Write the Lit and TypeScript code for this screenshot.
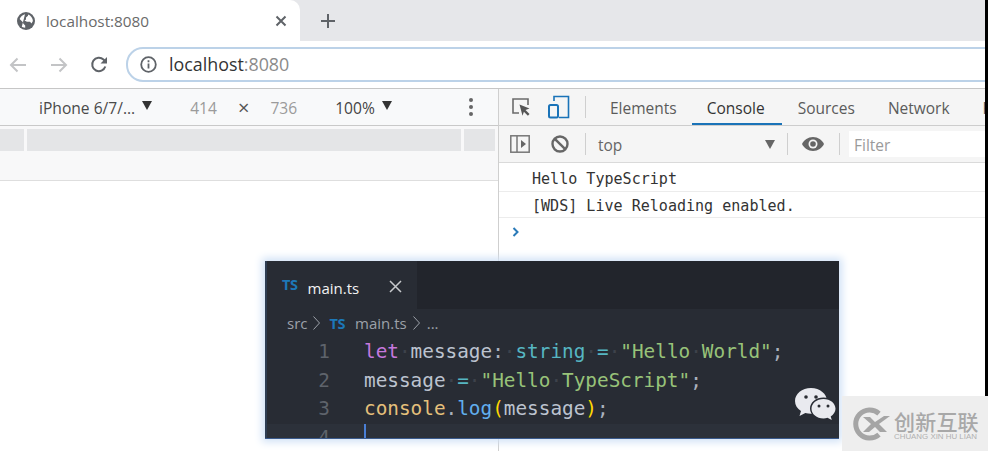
import { LitElement, html, css, svg } from "lit";
import { customElement } from "lit/decorators.js";

type Tok = [string, string];
const W: Tok = ["\u00b7", "ws"];
const CODE: Tok[][] = [
  [["let", "kw"], W, ["message", "id"], [":", "op"], W, ["string", "ty"], W, ["=", "eq"], W, ['"Hello', "st"], W, ['World"', "st"], [";", "op"]],
  [["message", "id"], W, ["=", "eq"], W, ['"Hello', "st"], W, ['TypeScript"', "st"], [";", "op"]],
  [["console", "cl"], [".", "op"], ["log", "fn"], ["(", "br"], ["message", "id"], [")", "br"], [";", "op"]],
];

@customElement("app-root")
export class AppRoot extends LitElement {
  static styles = css`
    :host {
      display: block;
      position: relative;
      width: 988px;
      height: 451px;
      overflow: hidden;
      background: #fff;
      font-family: "Open Sans", "Noto Sans", sans-serif;
      color: #4a4a4a;
    }
    svg { display: block; flex: none; }

    .strip { display: flex; align-items: center; height: 41px; background: #e6e7ea; }
    .tab {
      display: flex; align-items: center; width: 300px; height: 41px; box-sizing: border-box;
      background: #fff; border-radius: 0 10px 0 0; padding-left: 17px; font-size: 15.3px; color: #6a6a6a;
    }
    .tab .title { margin-left: 11px; flex: 1; }
    .tab .close { margin-right: 13px; }
    .plus { margin-left: 20px; }

    .toolbar { display: flex; align-items: center; box-sizing: border-box; padding: 0 0 0 9px; background: #fff; border-bottom: 1px solid #c6c6c6; height: 48px; }
    .nav { margin-right: 23px; }
    .nav.mid { margin-right: 22px; }
    .nav.reload { margin-right: 18px; }
    .omni {
      flex: 1; display: flex; align-items: center; height: 35px; box-sizing: border-box; margin: -1px -30px 0 0;
      border: 2px solid #bcd2e8; border-radius: 17px; padding-left: 12px; font-size: 17.85px; color: #8b8b8b; background: #fff;
    }
    .omni .host { color: #333; margin-left: 12px; }

    .split { display: grid; grid-template-columns: 499px 489px; height: 362px; }
    .left { border-right: 1px solid #cfcfcf; box-sizing: border-box; }

    .devbar {
      display: flex; align-items: center; height: 37px; box-sizing: border-box; background: #f8f9fa;
      border-bottom: 1px solid #c9c9c9; font-size: 15.6px; padding: 1px 0 0 39px;
    }
    .devbar .dim { color: #9b9b9b; }
    .tri { width: 0; height: 0; border-left: 5px solid transparent; border-right: 5px solid transparent; border-top: 9px solid #333; }
    .tri.a { margin: -4px 0 0 7px; }
    .w { margin-left: 38px; }
    .x { margin-left: 21px; margin-right: 21px; color: #555; font-size: 20px; line-height: 20px; }
    .pct { margin-left: 38px; color: #444; }
    .kebab { display: flex; flex-direction: column; gap: 3px; margin: -1px 0 0 77px; }
    .kebab i { width: 4px; height: 4px; border-radius: 50%; background: #666; }

    .rulers { height: 55px; box-sizing: border-box; background: #f8f8f9; border-bottom: 1px solid #dedede; padding-top: 3px; }
    .seg { display: grid; grid-template-columns: 24px 434px 31px; column-gap: 3px; }
    .seg div { height: 22px; background: #e4e5e7; }

    .right { min-width: 0; overflow: hidden; font-size: 15.5px; }
    .dtabs {
      display: flex; align-items: center; height: 37px; box-sizing: border-box; background: #f5f5f5;
      border-bottom: 1px solid #cdcdcd; padding-left: 12px; white-space: nowrap; color: #5b5b5b;
    }
    .sep { width: 1px; height: 22px; background: #cfcfcf; flex: none; }
    .dtabs .sep { margin: 0 24px 0 15px; }
    .dtab { height: 36px; line-height: 38px; margin-right: 33px; flex: none; }
    .dtab.first { margin-right: 30px; }
    .dtab.on { margin: 0 16px 0 -15px; padding: 0 15px; width: 60px; color: #333; border-bottom: 2px solid #1a73b8; box-sizing: content-box; height: 34px; }
    .ctool {
      display: flex; align-items: center; height: 37px; box-sizing: border-box; background: #f5f5f5;
      border-bottom: 1px solid #dadada; padding-left: 11px; white-space: nowrap; color: #666;
    }
    .ctool .top { margin: 2px 0 0 12px; width: 167px; }
    .ctool .tri2 { width: 0; height: 0; border-left: 5px solid transparent; border-right: 5px solid transparent; border-top: 9px solid #666; margin-right: 12px; }
    .filter { flex: 1; height: 26px; background: #fff; margin-left: 9px; padding-left: 5px; line-height: 28px; color: #9a9a9a; }

    .log {
      font-family: "DejaVu Sans Mono", monospace; font-size: 15.05px; color: #333; padding-left: 33px;
      border-bottom: 1px solid #ececec; box-sizing: border-box; white-space: pre;
    }
    .log.a { height: 29px; line-height: 32px; }
    .log.b { height: 26px; line-height: 28px; }
    .prompt { padding: 9px 0 0 13px; }

    .panel {
      position: absolute; left: 265px; top: 261px; width: 574px; height: 178px; background: #282c34;
      box-shadow: 0 0 8px 3px #d0e1f6; overflow: hidden; border-bottom: 1px solid #3a5a8c; box-sizing: border-box;
      color: #d4d7dc;
    }
    .panel::after { content: ""; position: absolute; left: 0; top: 0; bottom: 0; width: 2px; background: #2e3d52; }
    .vtabs { display: flex; height: 48px; background: #22252c; padding-left: 2px; }
    .vtab { display: flex; align-items: center; width: 150px; background: #282c34; box-sizing: border-box; padding: 5px 0 0 15px; font-size: 15px; color: #f2f2f2; }
    .ts { font-weight: 700; color: #1d78b8; font-size: 14.5px; letter-spacing: -0.4px; font-family: "Noto Sans", sans-serif; }
    .vtab .ts { margin: -7px 10px 0 0; }
    .vtab svg { margin-left: 30px; margin-top: -3px; }
    .crumbs { display: flex; align-items: center; height: 29px; box-sizing: border-box; padding: 0 0 2px 22px; font-size: 15px; color: #9ca1a9; }
    .crumbs .c1 { margin: 0 8px 0 5px; }
    .crumbs .nm { margin-left: 10px; }
    .crumbs .c2 { margin: 0 6px 0 5px; }
    .code { font-family: "DejaVu Sans Mono", monospace; font-size: 19.35px; height: 110px; }
    .ln { display: flex; height: 28.5px; line-height: 28.5px; white-space: pre; }
    .ln .n { width: 65px; text-align: right; color: #5e636b; flex: none; }
    .ln .t { margin-left: 34px; }
    .ln.cur { background: #2c313a; position: relative; }
    .caret { position: absolute; left: 99px; top: 0; width: 2px; height: 18px; background: #4a7fd6; }
    .kw { color: #c678dd; } .id { color: #bcc3cf; } .op { color: #aab1bd; } .ty { color: #56b6c2; }
    .eq { color: #56b6c2; } .st { color: #98c379; } .cl { color: #e5c07b; } .fn { color: #61afef; } .br { color: #ffd700; }
    .ws { color: #3d424b; }
    .wechat { position: absolute; left: 795px; top: 388px; }

    .edge { position: absolute; right: 0; top: 0; width: 3px; height: 396px; background: #000; }
    .mark {
      position: absolute; left: 842px; top: 396px; width: 146px; height: 55px; background: #eeeeee;
      display: flex; align-items: center; padding-left: 11px; box-sizing: border-box; color: #a5a5a5;
    }
    .brand { margin-left: 3px; margin-top: 3px; }
    .cn { font-family: "Noto Sans CJK SC", sans-serif; font-size: 21px; font-weight: 500; line-height: 23px; letter-spacing: 0.2px; color: #a8a8a8; }
    .en { font-family: "Liberation Sans", sans-serif; font-size: 7.9px; line-height: 8px; color: #b0b0b0; white-space: nowrap; }
  `;

  private chevron() {
    return svg`<path d="M1.500 1.500l6 6.500-6 6.500" fill="none" stroke="#9ca1a9" stroke-width="1"/>`;
  }

  render() {
    return html`
      <div class="strip">
        <div class="tab">
          <svg width="18" height="18" viewBox="0 0 18 18"><circle cx="9" cy="9" r="9" fill="#5f6368"/><path d="M8 2.200C5.500 3 3.500 4.600 2.600 7l3.600 3.400v1.200l2 2v2.200c-2-.2-3-.6-3.400-1M11 2.400v1.400l-2 1.600v2l-1.500 1 2.500 1.400h3l1.500 1.600 1.400-2.400c0-2.800-1.900-5.500-4.900-6.600z" fill="#fff"/></svg>
          <span class="title">localhost:8080</span>
          <svg class="close" width="12" height="12" viewBox="0 0 12 12"><path d="M1.500 1.500l9 9M10.500 1.500l-9 9" stroke="#5f6368" stroke-width="2"/></svg>
        </div>
        <svg class="plus" width="16" height="16" viewBox="0 0 16 16"><path d="M8 1v14M1 8h14" stroke="#5f6368" stroke-width="2"/></svg>
      </div>
      <div class="toolbar">
        <svg class="nav" width="18" height="16" viewBox="0 0 18 16"><path d="M17 8H2M8.500 1.500L2 8l6.500 6.500" fill="none" stroke="#c3c4c6" stroke-width="2"/></svg>
        <svg class="nav mid" width="18" height="16" viewBox="0 0 18 16"><path d="M1 8h15M9.500 1.500L16 8l-6.500 6.500" fill="none" stroke="#c3c4c6" stroke-width="2"/></svg>
        <svg class="nav reload" width="18" height="18" viewBox="0 0 18 18"><path d="M15.300 10.500A6.700 6.700 0 1 1 13.500 3.600L15.500 5.500" fill="none" stroke="#5f6368" stroke-width="2"/><path d="M17 1v6.500h-6.500z" fill="#5f6368"/></svg>
        <div class="omni">
          <svg width="17" height="17" viewBox="0 0 17 17"><circle cx="8.500" cy="8.500" r="7.300" fill="none" stroke="#5f6368" stroke-width="1.800"/><path d="M8.500 7.500v5M8.500 4.300v1.900" stroke="#5f6368" stroke-width="1.800"/></svg>
          <span class="host">localhost</span><span>:8080</span>
        </div>
      </div>
      <div class="split">
        <div class="left">
          <div class="devbar">
            <span>iPhone 6/7/...</span><span class="tri a"></span>
            <span class="dim w">414</span><span class="x">×</span><span class="dim">736</span>
            <span class="pct">100%</span><span class="tri a"></span>
            <span class="kebab"><i></i><i></i><i></i></span>
          </div>
          <div class="rulers"><div class="seg"><div></div><div></div><div></div></div></div>
        </div>
        <div class="right">
          <div class="dtabs">
            <svg width="20" height="20" viewBox="0 0 20 20"><path d="M8 16H2V2h15v6" fill="none" stroke="#6b6b6b" stroke-width="1.600"/><path d="M8.500 7.500l10 4-4 1.600 4 4-1.600 1.600-4-4-1.400 4z" fill="#555"/></svg>
            <svg style="margin-left:17px" width="22" height="24" viewBox="0 0 22 24"><path d="M6 6V1.500h14.500v21H11" fill="none" stroke="#1a73b8" stroke-width="1.600"/><rect x="1" y="10" width="9" height="12.500" rx="1.500" fill="none" stroke="#1a73b8" stroke-width="2"/></svg>
            <span class="sep"></span>
            <span class="dtab first">Elements</span>
            <span class="dtab on">Console</span>
            <span class="dtab">Sources</span>
            <span class="dtab">Network</span>
            <span class="dtab">Performance</span>
          </div>
          <div class="ctool">
            <svg width="20" height="18" viewBox="0 0 20 18"><rect x=".8" y=".8" width="18.400" height="16.400" fill="none" stroke="#777" stroke-width="1.500"/><path d="M7 1v16" stroke="#777" stroke-width="1.500"/><path d="M11 5l5 4-5 4z" fill="#666"/></svg>
            <svg style="margin-left:21px;margin-right:16px" width="18" height="18" viewBox="0 0 18 18"><circle cx="9" cy="9" r="7.500" fill="none" stroke="#666" stroke-width="2.400"/><path d="M3.800 3.800l10.400 10.400" stroke="#666" stroke-width="2.400"/></svg>
            <span class="sep"></span>
            <span class="top">top</span>
            <span class="tri2"></span>
            <span class="sep"></span>
            <svg style="margin:0 15px 0 14px" width="22" height="14" viewBox="0 0 22 14"><path d="M11 0C6 0 2 3 0 7c2 4 6 7 11 7s9-3 11-7c-2-4-6-7-11-7z" fill="#666"/><circle cx="11" cy="7" r="4.500" fill="#f5f5f5"/><circle cx="11" cy="7" r="2.800" fill="#666"/></svg>
            <span class="sep"></span>
            <div class="filter">Filter</div>
          </div>
          <div class="log a">Hello TypeScript</div>
          <div class="log b">[WDS] Live Reloading enabled.</div>
          <div class="prompt"><svg width="8" height="10" viewBox="0 0 8 10"><path d="M1.500 1l4 4-4 4" fill="none" stroke="#2a7ab8" stroke-width="2"/></svg></div>
        </div>
      </div>

      <div class="panel">
        <div class="vtabs">
          <div class="vtab">
            <span class="ts">TS</span><span>main.ts</span>
            <svg width="13" height="13" viewBox="0 0 13 13"><path d="M1 1l11 11M12 1L1 12" stroke="#c8cacd" stroke-width="1.500"/></svg>
          </div>
        </div>
        <div class="crumbs">
          <span>src</span><svg class="c1" width="9" height="16" viewBox="0 0 9 16">${this.chevron()}</svg>
          <span class="ts">TS</span><span class="nm">main.ts</span>
          <svg class="c2" width="9" height="16" viewBox="0 0 9 16">${this.chevron()}</svg><span>...</span>
        </div>
        <div class="code">
          ${CODE.map((l, i) => html`<div class="ln"><span class="n">${i + 1}</span><span class="t">${l.map(([t, c]) => html`<span class=${c}>${t}</span>`)}</span></div>`)}
          <div class="ln cur"><span class="n">4</span><span class="caret"></span></div>
        </div>
      </div>

      <svg class="wechat" width="42" height="36" viewBox="0 0 42 36">
        <path d="M16 0C7 0 0 5.800 0 13c0 4.200 2.300 7.700 6 10l-1.500 5 5.800-3c1.800.5 3.700.8 5.700.8 9 0 16-5.800 16-12.800S25 0 16 0z" fill="#e9eaef"/>
        <path d="M28.500 9.500c-7.500 0-13.500 4.800-13.500 11s6 11 13.500 11c1.500 0 3-.2 4.300-.6l4.700 2.600-1.200-4.200c3-2 5.200-5.200 5.200-8.800 0-6.200-5.500-11-13-11z" fill="#282c34"/>
        <path d="M28.500 11c-6.800 0-12 4.300-12 9.700s5.200 9.700 12 9.700c1.400 0 2.800-.2 4-.6l4.300 2.200-1.100-3.600c2.800-1.800 4.800-4.600 4.800-7.700 0-5.400-5.200-9.700-12-9.700z" fill="#e9eaef"/>
        <circle cx="11" cy="9" r="1.800" fill="#2a2d33"/><circle cx="21" cy="9" r="1.800" fill="#2a2d33"/>
        <circle cx="24" cy="18" r="1.500" fill="#2a2d33"/><circle cx="33" cy="18" r="1.500" fill="#2a2d33"/>
      </svg>

      <div class="edge"></div>
      <div class="mark">
        <svg width="38" height="34" viewBox="0 0 38 34">
          <path d="M26 6.500A14 14 0 1 0 26 27.500" fill="none" stroke="#a5a5a5" stroke-width="5"/>
          <path d="M10 10h7l5 5 9-6h6l-11 8 8 8h-7l-5-5-6 5h-6l8-8z" fill="#a5a5a5"/>
        </svg>
        <div class="brand">
          <div class="cn">创新互联</div>
          <div class="en">CHUANG XIN HU LIAN</div>
        </div>
      </div>
    `;
  }
}
